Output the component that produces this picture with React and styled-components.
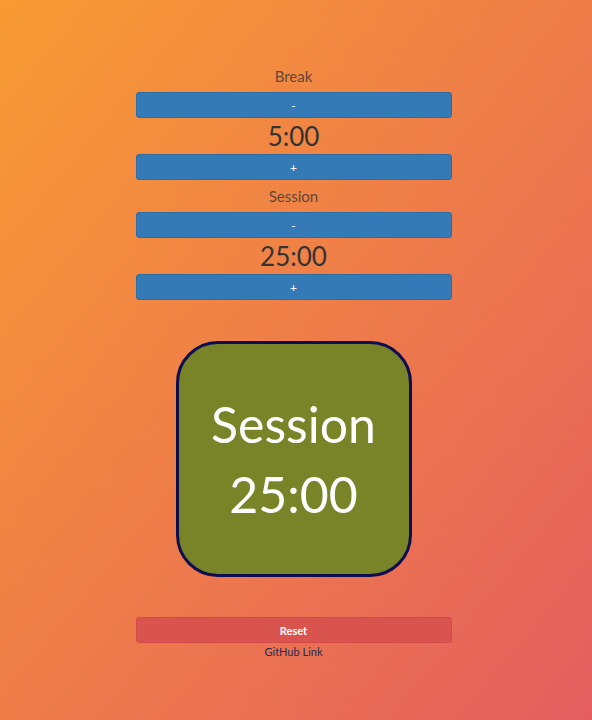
import React, { useState } from "react";
import styled, { createGlobalStyle } from "styled-components";

const GlobalStyle = createGlobalStyle`
  html, body {
    margin: 0;
    padding: 0;
    min-height: 100%;
  }
  body {
    font-family: Lato, "Open Sans", "Liberation Sans", sans-serif;
    background: linear-gradient(to bottom right, #f89b33, #e45e60);
    min-height: 720px;
    padding-right: 5px;
  }
`;

const Page = styled.div`
  width: 316px;
  margin: 0 auto;
  padding-top: 60px;
  display: flex;
  flex-direction: column;
  align-items: stretch;
  text-align: center;
`;

const Label = styled.div`
  font-size: 15px;
  line-height: 22px;
  margin: 5px 0;
  color: rgba(51, 51, 51, 0.78);
`;

const Value = styled.div`
  font-size: 26px;
  line-height: 36px;
  color: #333;
`;

const Btn = styled.button`
  height: 26px;
  width: 100%;
  border: 1px solid ${(p) => (p.$danger ? "#d14a47" : "#2e6da4")};
  border-radius: 3px;
  background: ${(p) => (p.$danger ? "#d9534f" : "#337ab7")};
  color: #fff;
  font-family: inherit;
  font-size: ${(p) => (p.$danger ? "11px" : "12px")};
  font-weight: ${(p) => (p.$danger ? 700 : 400)};
  cursor: pointer;
  padding: 0;
`;

const Clock = styled.div`
  align-self: center;
  margin: 41px 0 40px;
  width: 230px;
  height: 230px;
  border: 3px solid #0f0d52;
  border-radius: 42px;
  background: #788427;
  color: #fff;
  display: flex;
  flex-direction: column;
  justify-content: center;
  align-items: center;
  font-size: 50px;
  line-height: 70px;
`;

const Link = styled.a`
  font-size: 11px;
  line-height: 16px;
  color: #2a2850;
  text-decoration: none;
  margin-top: 1px;
`;

const fmt = (m) => `${m}:00`;

const Setting = ({ title, minutes, setMinutes }) => (
  <>
    <Label>{title}</Label>
    <Btn onClick={() => setMinutes(Math.max(1, minutes - 1))}>-</Btn>
    <Value>{fmt(minutes)}</Value>
    <Btn onClick={() => setMinutes(Math.min(60, minutes + 1))}>+</Btn>
  </>
);

export default function App() {
  const [breakLen, setBreakLen] = useState(5);
  const [sessionLen, setSessionLen] = useState(25);

  return (
    <>
      <GlobalStyle />
      <Page>
        <Setting title="Break" minutes={breakLen} setMinutes={setBreakLen} />
        <Setting title="Session" minutes={sessionLen} setMinutes={setSessionLen} />
        <Clock>
          <div>Session</div>
          <div>{fmt(sessionLen)}</div>
        </Clock>
        <Btn
          $danger
          onClick={() => {
            setBreakLen(5);
            setSessionLen(25);
          }}
        >
          Reset
        </Btn>
        <Link href="#">GitHub Link</Link>
      </Page>
    </>
  );
}
